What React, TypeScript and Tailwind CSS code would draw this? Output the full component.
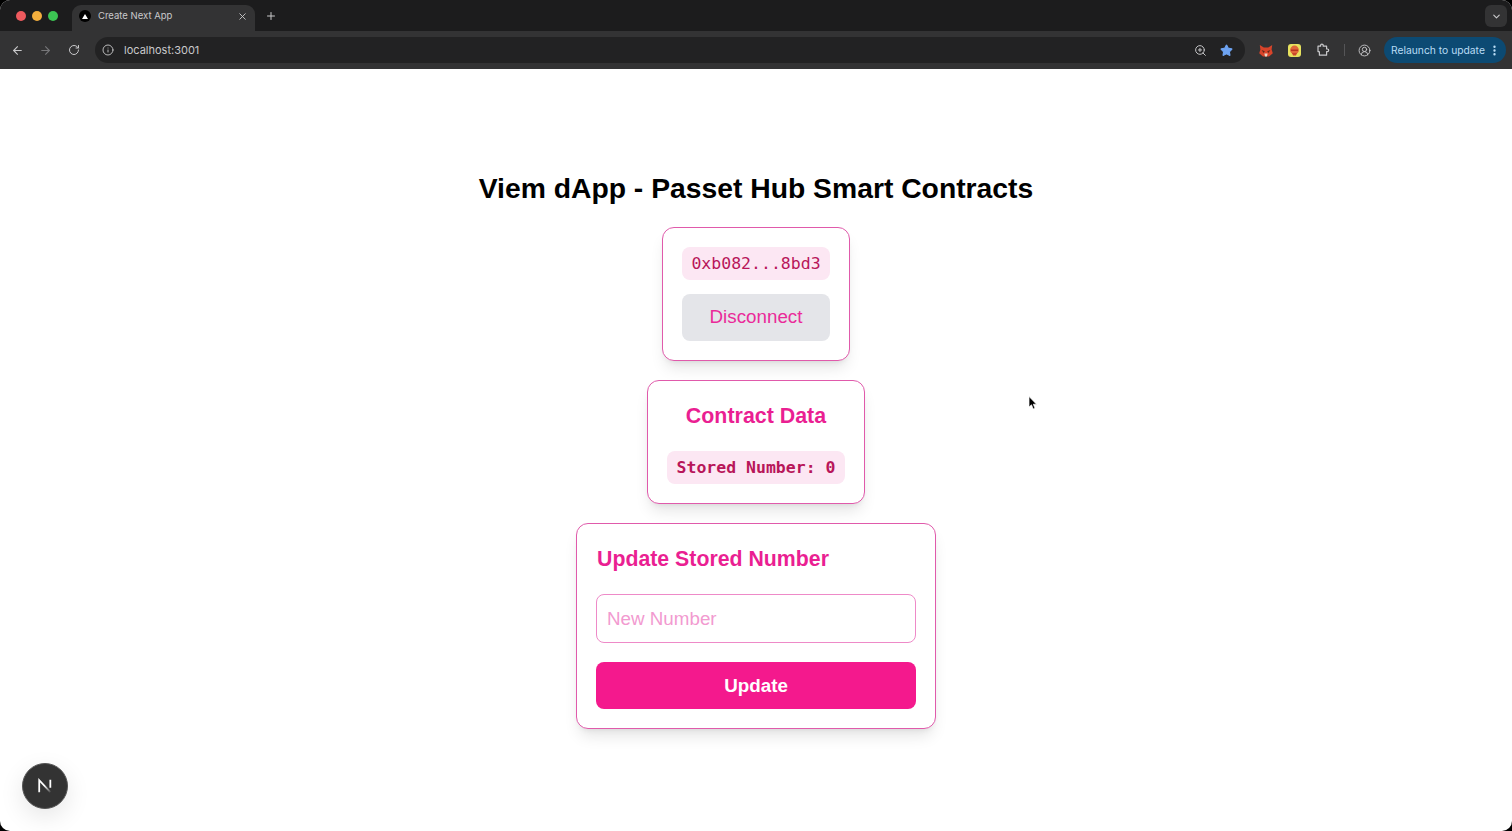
import { ArrowLeft, ArrowRight, ChevronDown, CircleUserRound, EllipsisVertical, Info, Plus, RotateCw, Star, X, ZoomIn } from "lucide-react";

function FoxIcon() {
   return (
      <svg width="14" height="13" viewBox="0 0 14 13">
         <path d="M0.8 1 L4.8 3.6 H9.2 L13.2 1 L12.6 5.5 L13.8 9.2 L10 12.5 H4 L0.2 9.2 L1.4 5.5 Z" fill="#d8442a" />
         <path d="M2.6 6 L5.8 7.2 L4.6 9 Z M11.4 6 L8.2 7.2 L9.4 9 Z" fill="#5c2a1c" />
         <path d="M5.4 9.6 H8.6 L8 12.5 H6 Z" fill="#e8d8c8" />
      </svg>
   )
}

function HelmetIcon() {
   return (
      <div className="flex size-[13px] items-center justify-center rounded-[3px] bg-[#e7e25e]">
         <svg width="11" height="11" viewBox="0 0 11 11">
            <circle cx="5.5" cy="5" r="4.4" fill="#e0673a" />
            <path d="M2 4.5 H9 V6 H2 Z" fill="#b8351f" />
            <path d="M3 8 H8 L7 10.5 H4 Z" fill="#c9472a" />
         </svg>
      </div>
   )
}

function ExtensionIcon() {
   return (
      <svg width="14" height="14" viewBox="0 0 14 14" fill="none" stroke="currentColor" strokeWidth="1.2" strokeLinejoin="round">
         <path d="M2 3.2 H4.6 V2.4 A1.3 1.3 0 0 1 7.2 2.4 V3.2 H10.6 V6 H11.4 A1.3 1.3 0 0 1 11.4 8.6 H10.6 V12.2 H3.4 V9.4 A1 1 0 0 0 3 8.6 H2 Z" />
      </svg>
   )
}

function ChromeBar() {
   return (
      <header className="shrink-0 bg-[#1c1c1d] text-[#c9c9cb]">
         <div className="flex h-[31px] items-end">
            <div className="flex h-[31px] w-[72px] items-center gap-[6px] pl-4">
               <span className="size-[10px] rounded-full bg-[#ee5a5e]" />
               <span className="size-[10px] rounded-full bg-[#f3ae3d]" />
               <span className="size-[10px] rounded-full bg-[#3cc453]" />
            </div>
            <div className="flex h-[26px] w-[183px] items-center rounded-t-[9px] bg-[#333334] pb-[4px] pl-[7px] pr-[7px]">
               <span className="flex size-3 items-center justify-center rounded-full bg-black">
                  <span className="size-0 border-x-[3px] border-b-[5px] border-x-transparent border-b-white" />
               </span>
               <span className="ml-[7px] flex-1 font-['Inter',sans-serif] text-[9.5px] leading-none">Create Next App</span>
               <X size={11} strokeWidth={2} />
            </div>
            <div className="flex h-[26px] w-[32px] items-center justify-center pb-[4px]">
               <Plus size={12} strokeWidth={2} />
            </div>
            <div className="flex-1" />
            <div className="mb-[4px] mr-[5px] flex size-[22px] items-center justify-center rounded-md bg-[#333334]">
               <ChevronDown size={11} strokeWidth={2.5} />
            </div>
         </div>
         <div className="flex h-[38px] items-center bg-[#333334]">
            <div className="flex w-[95px] items-center pl-[11px]">
               <ArrowLeft size={13} strokeWidth={2} />
               <ArrowRight size={13} strokeWidth={2} className="ml-[15px] text-[#777779]" />
               <RotateCw size={12} strokeWidth={2} className="ml-[16px]" />
            </div>
            <div className="flex h-[26px] flex-1 items-center rounded-full bg-[#222223] pl-[7px] pr-[12px]">
               <Info size={12} strokeWidth={1.8} />
               <span className="ml-[10px] flex-1 font-['Inter',sans-serif] text-[11px] leading-none">localhost:3001</span>
               <ZoomIn size={13} strokeWidth={1.8} />
               <Star size={13} className="ml-[13px] fill-[#6da3f2] text-[#6da3f2]" />
            </div>
            <div className="ml-[14px] flex items-center">
               <FoxIcon />
               <span className="ml-[15px]"><HelmetIcon /></span>
               <span className="ml-[15px]"><ExtensionIcon /></span>
               <span className="ml-[14px] h-3 w-px bg-[#555557]" />
               <CircleUserRound size={13} strokeWidth={1.7} className="ml-[13px]" />
            </div>
            <div className="ml-[13px] mr-[6px] flex h-[26px] w-[122px] items-center rounded-full bg-[#0c4a73] pl-[7px] font-['Inter',sans-serif] text-[10.3px] leading-none text-[#b9dcf5]">
               <span className="flex-1 whitespace-nowrap">Relaunch to update</span>
               <EllipsisVertical size={13} strokeWidth={2.4} className="mr-[5px]" />
            </div>
         </div>
      </header>
   )
}

const card = "rounded-xl border border-[#e05aab] bg-white p-[19px] shadow-lg"
const chip = "flex h-[33px] items-center justify-center rounded-lg bg-[#fce7f3] pt-[1px] font-['DejaVu_Sans_Mono',monospace] text-[16.5px] text-[#b8165a]"

export default function App() {
   return (
      <div className="h-[831px] overflow-hidden bg-black">
         <div className="relative flex h-full flex-col overflow-hidden rounded-[10px] bg-white font-['Liberation_Sans',sans-serif]">
            <ChromeBar />
            <main className="flex flex-col items-center pt-[101px]">
               <h1 className="mb-[21px] text-[28.3px] font-bold leading-9 text-black">Viem dApp - Passet Hub Smart Contracts</h1>

               <div className={`${card} flex w-[188px] flex-col gap-[14px]`}>
                  <div className={chip}>0xb082...8bd3</div>
                  <button className="h-[47px] rounded-lg bg-[#e4e5e9] text-[18.8px] text-[#ea2a99]">Disconnect</button>
               </div>

               <div className={`${card} mt-[19px] w-[218px]`}>
                  <h2 className="mb-[19px] text-center text-[21.4px] font-bold leading-8 text-[#ea1f92]">Contract Data</h2>
                  <div className={`${chip} font-bold`}>Stored Number: 0</div>
               </div>

               <div className={`${card} mt-[19px] w-[360px]`}>
                  <h2 className="mb-[19px] pl-px text-[21.3px] font-bold leading-8 text-[#ea1f92]">Update Stored Number</h2>
                  <input
                     placeholder="New Number"
                     className="mb-[19px] h-[49px] w-full rounded-lg border border-[#ee8ac8] px-[10px] pt-[1px] text-[18.8px] outline-none placeholder:text-[#f29ad0]"
                  />
                  <button className="h-[47px] w-full rounded-lg bg-[#f4198d] pt-[2px] text-[18.8px] font-bold text-white">Update</button>
               </div>
            </main>

            {/* dev tools badge */}
            <div className="absolute bottom-[22px] left-[22px] flex size-[46px] items-center justify-center rounded-full border border-[#555] bg-[#333] shadow-[0_8px_24px_rgba(0,0,0,0.1)]">
               <svg width="16" height="16" viewBox="0 0 18 18">
                  <defs>
                     <linearGradient id="nfade" x1="0" y1="0" x2="1" y2="1">
                        <stop offset="0.45" stopColor="#fff" />
                        <stop offset="1" stopColor="#fff" stopOpacity="0.1" />
                     </linearGradient>
                  </defs>
                  <path d="M2.5 16 V2.5 L15 16" fill="none" stroke="url(#nfade)" strokeWidth="2" />
                  <path d="M15 2 V11" fill="none" stroke="#fff" strokeWidth="2" />
               </svg>
            </div>

            {/* mouse pointer */}
            <svg className="absolute left-[1028px] top-[396px]" width="10" height="15" viewBox="0 0 10 15">
               <path d="M1 0.5 V11 L3.5 8.8 L5.2 13 L7 12.2 L5.3 8.2 H8.5 Z" fill="#000" stroke="#fff" strokeWidth="0.7" />
            </svg>
         </div>
      </div>
   )
}
